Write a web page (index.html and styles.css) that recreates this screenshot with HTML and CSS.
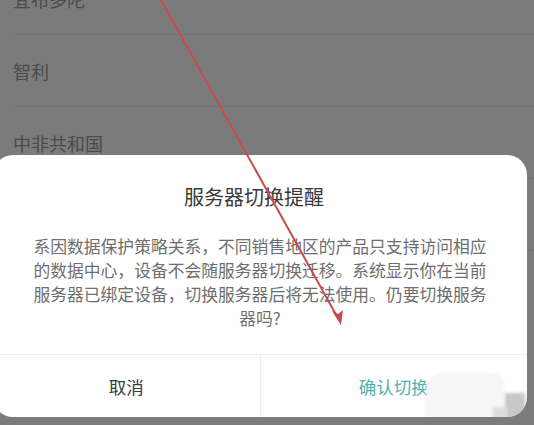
FILE: index.html
```html
<!DOCTYPE html>
<html lang="zh-CN">
<head>
    <meta charset="UTF-8">
    <meta name="viewport" content="width=device-width, initial-scale=1.0">
    <title>服务器切换提醒</title>
    <link rel="stylesheet" href="styles.css">
</head>
<body>
    <div class="country-list">
        <div class="row">宜布多陀</div>
        <div class="row">智利</div>
        <div class="row">中非共和国</div>
        <div class="row">中国</div>
    </div>

    <div class="dialog">
        <h2>服务器切换提醒</h2>
        <p>系因数据保护策略关系，不同销售地区的产品只支持访问相应的数据中心，设备不会随服务器切换迁移。系统显示你在当前服务器已绑定设备，切换服务器后将无法使用。仍要切换服务器吗?</p>
        <div class="actions">
            <div class="btn cancel">取消</div>
            <div class="btn confirm">确认切换</div>
        </div>
        <div class="mark mark-a"></div>
        <div class="mark mark-b"></div>
        <div class="mark mark-c"></div>
    </div>

    <svg class="arrow" width="534" height="425" viewBox="0 0 534 425">
        <line x1="160" y1="-2" x2="339" y2="320" stroke="#c94a4e" stroke-width="2"/>
        <path d="M341 325 L332 311 L338 314 L343 310 Z" fill="#c94a4e"/>
    </svg>
</body>
</html>
```

FILE: styles.css
```css
* {
    padding: 0;
    margin: 0;
    box-sizing: border-box;
}

body {
    font-family: "Noto Sans CJK SC", "Noto Sans", sans-serif;
    background: #7b7b7b;
    width: 534px;
    height: 425px;
    overflow: hidden;
    position: relative;
}

/* list behind the overlay */
.country-list {
    margin-top: -37px;
}

.row {
    height: 72px;
    margin-left: 13px;
    display: flex;
    align-items: center;
    font-size: 18px;
    color: #4a4a4a;
    border-bottom: 1px solid #737373;
}

/* Dialog */
.dialog {
    position: absolute;
    left: -7px;
    top: 155px;
    width: 534px;
    height: 262px;
    background: #fff;
    border-radius: 20px;
    overflow: hidden;
}

.dialog h2 {
    padding: 30px 12px 0 0;
    font-size: 20px;
    line-height: 24px;
    font-weight: normal;
    color: #3a3a3a;
    text-align: center;
}

.dialog p {
    padding: 25px 37px 24px;
    font-size: 16.8px;
    line-height: 24px;
    color: #6e6e6e;
    text-align: center;
}

.actions {
    display: flex;
    height: 63px;
    border-top: 1px solid #efefef;
}

.btn {
    flex: 1;
    display: flex;
    align-items: center;
    justify-content: center;
    font-size: 17.5px;
}

.cancel {
    color: #3a3a3a;
    border-right: 1px solid #efefef;
}

.confirm {
    color: #4db3b3;
}

/* blurred watermark patches */
.mark {
    position: absolute;
    background: rgba(246, 246, 246, 0.97);
    filter: blur(1.5px);
}

.mark-a {
    left: 433px;
    top: 218px;
    width: 78px;
    height: 44px;
    border-radius: 16px 12px 0 0;
}

.mark-b {
    left: 512px;
    top: 238px;
    width: 20px;
    height: 26px;
    background: #c8c8c8;
}

.mark-c {
    left: 500px;
    top: 252px;
    width: 14px;
    height: 12px;
    background: #dcdcdc;
}

.arrow {
    position: absolute;
    left: 0;
    top: 0;
}
```
